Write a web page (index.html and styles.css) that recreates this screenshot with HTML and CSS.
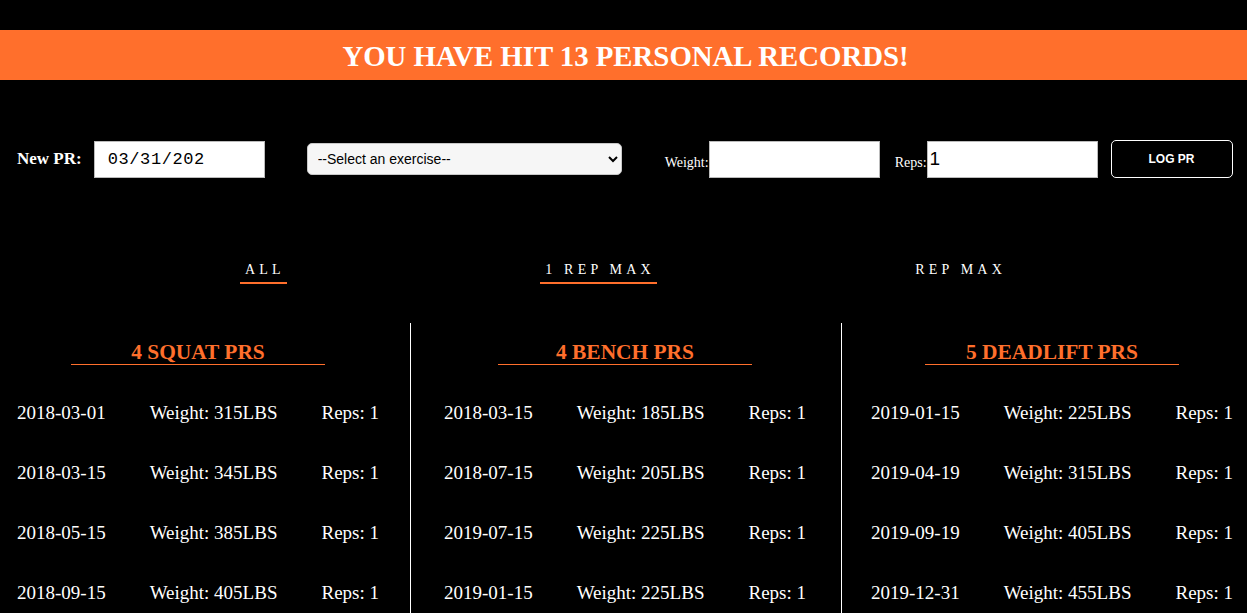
FILE: index.html
```html
<!DOCTYPE html>
<html>
<head>
<meta charset="utf-8">
<link rel="stylesheet" href="styles.css">
</head>
<body>
<header class="banner"><h1>YOU HAVE HIT 13 PERSONAL RECORDS!</h1></header>
<form class="pr-form">
  <label class="new-pr">New PR:</label>
  <input class="date-input" type="text" value="03/31/202" readonly>
  <select class="exercise">
    <option>--Select an exercise--</option>
  </select>
  <label class="small-label weight-label">Weight:</label>
  <input class="num-input" type="text" value="">
  <label class="small-label reps-label">Reps:</label>
  <input class="num-input" type="text" value="1">
  <button type="button" class="log-btn">LOG PR</button>
</form>
<nav class="tabs">
  <span class="tab active">ALL</span>
  <span class="tab active">1 REP MAX</span>
  <span class="tab">REP MAX</span>
</nav>
<main class="columns">
  <section class="col col-1">
    <div class="col-inner">
      <h2 class="col-title">4 SQUAT PRS</h2>
      <div class="row"><span>2018-03-01</span><span>Weight: 315LBS</span><span>Reps: 1</span></div>
      <div class="row"><span>2018-03-15</span><span>Weight: 345LBS</span><span>Reps: 1</span></div>
      <div class="row"><span>2018-05-15</span><span>Weight: 385LBS</span><span>Reps: 1</span></div>
      <div class="row"><span>2018-09-15</span><span>Weight: 405LBS</span><span>Reps: 1</span></div>
    </div>
  </section>
  <section class="col col-2">
    <div class="col-inner">
      <h2 class="col-title">4 BENCH PRS</h2>
      <div class="row"><span>2018-03-15</span><span>Weight: 185LBS</span><span>Reps: 1</span></div>
      <div class="row"><span>2018-07-15</span><span>Weight: 205LBS</span><span>Reps: 1</span></div>
      <div class="row"><span>2019-07-15</span><span>Weight: 225LBS</span><span>Reps: 1</span></div>
      <div class="row"><span>2019-01-15</span><span>Weight: 225LBS</span><span>Reps: 1</span></div>
    </div>
  </section>
  <section class="col col-3">
    <div class="col-inner">
      <h2 class="col-title">5 DEADLIFT PRS</h2>
      <div class="row"><span>2019-01-15</span><span>Weight: 225LBS</span><span>Reps: 1</span></div>
      <div class="row"><span>2019-04-19</span><span>Weight: 315LBS</span><span>Reps: 1</span></div>
      <div class="row"><span>2019-09-19</span><span>Weight: 405LBS</span><span>Reps: 1</span></div>
      <div class="row"><span>2019-12-31</span><span>Weight: 455LBS</span><span>Reps: 1</span></div>
    </div>
  </section>
</main>
</body>
</html>
```
FILE: styles.css
```css
html, body {
  margin: 0;
  padding: 0;
  background: #000;
  color: #fff;
  font-family: "Liberation Serif", "Times New Roman", serif;
  overflow: hidden;
  height: 613px;
}

.banner {
  margin-top: 30px;
  height: 50px;
  background: #ff6f2c;
  display: flex;
  align-items: center;
  justify-content: center;
}
.banner h1 {
  margin: 0 0 0 4px;
  padding-top: 2px;
  font-size: 28.8px;
  font-weight: bold;
  color: #fff;
}

.pr-form {
  display: flex;
  align-items: center;
  margin-top: 60px;
  padding-left: 17px;
  height: 38px;
}
.new-pr {
  font-weight: bold;
  font-size: 17px;
  margin-right: 12px;
}
.date-input {
  box-sizing: border-box;
  width: 171px;
  height: 37px;
  border: 1px solid #bbb;
  background: #fff;
  padding: 0 0 0 13px;
  font-family: "Liberation Mono", monospace;
  font-size: 17px;
  letter-spacing: 0.6px;
  color: #000;
  outline: none;
}
.exercise {
  box-sizing: border-box;
  margin-left: 42px;
  width: 315px;
  height: 32px;
  border: 1px solid #c8c8c8;
  border-radius: 5px;
  background: #f6f6f6;
  font-family: "Liberation Sans", Arial, sans-serif;
  font-size: 14px;
  color: #000;
  padding-left: 6px;
}
.small-label {
  font-size: 14px;
  padding-top: 7px;
}
.weight-label { margin-left: 43px; }
.reps-label { margin-left: 15px; }
.num-input {
  box-sizing: border-box;
  width: 171px;
  height: 37px;
  border: 1px solid #bbb;
  background: #fff;
  padding: 0 0 0 2px;
  font-family: "Liberation Sans", Arial, sans-serif;
  font-size: 19px;
  color: #000;
  outline: none;
}
.log-btn {
  box-sizing: border-box;
  margin-left: 13px;
  width: 122px;
  height: 38px;
  background: #000;
  color: #fff;
  border: 1px solid #fff;
  border-radius: 5px;
  font-family: "Liberation Sans", Arial, sans-serif;
  font-weight: bold;
  font-size: 12px;
  padding-bottom: 2px;
}

.tabs {
  display: flex;
  justify-content: space-between;
  padding: 0 239px 0 240px;
  margin-top: 84px;
}
.tab {
  font-size: 14px;
  letter-spacing: 4.2px;
  padding: 0 2px 4px 5px;
  border-bottom: 2px solid transparent;
}
.tab.active {
  border-bottom-color: #ff6f2c;
}

.columns {
  display: flex;
  margin-top: 39px;
  height: 300px;
}
.col {
  box-sizing: border-box;
  flex: none;
}
.col-1 { width: 410px; padding-left: 17px; }
.col-2 {
  width: 432px;
  padding-left: 33px;
  border-left: 1px solid #fff;
  border-right: 1px solid #fff;
}
.col-3 { width: 405px; padding-left: 29px; }
.col-inner {
  width: 362px;
  display: flex;
  flex-direction: column;
  align-items: center;
}
.col-title {
  width: 254px;
  margin: 18px 0 0;
  text-align: center;
  color: #ff6f2c;
  font-size: 21.4px;
  font-weight: bold;
  line-height: 22px;
  padding-bottom: 1px;
  border-bottom: 1px solid #ff6f2c;
}
.row {
  align-self: stretch;
  display: flex;
  justify-content: space-between;
  font-size: 19px;
  line-height: 22px;
  margin-top: 38px;
}
.row:first-of-type { margin-top: 37px; }
```
